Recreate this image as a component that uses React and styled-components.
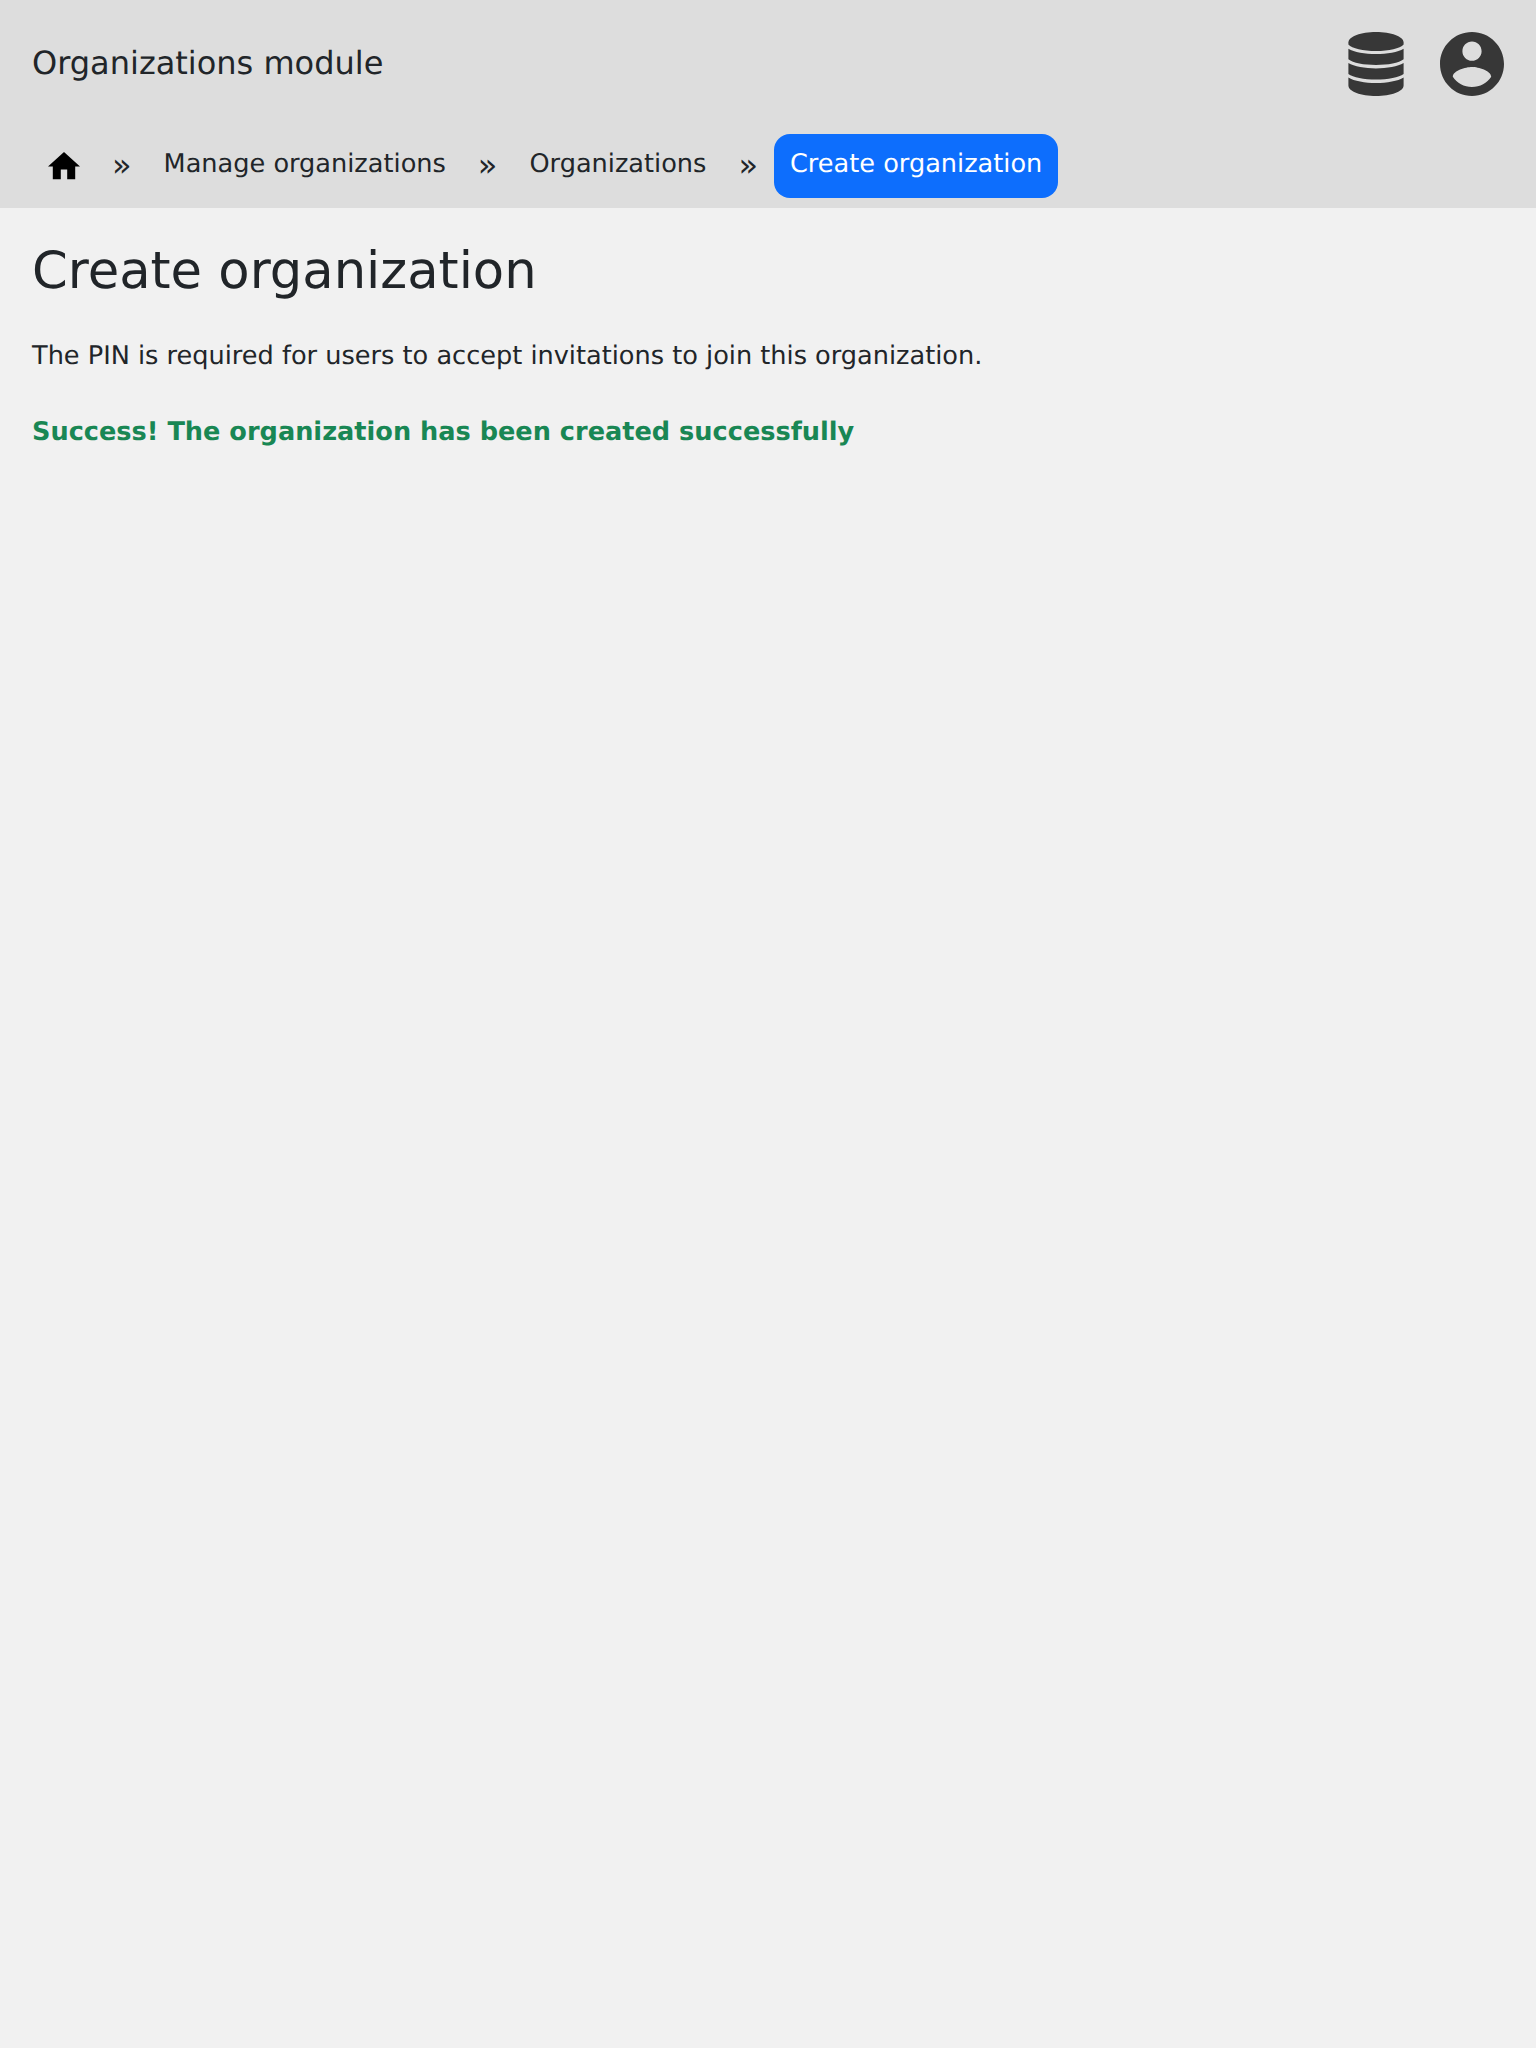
import React from "react";
import styled, { createGlobalStyle } from "styled-components";

const GlobalStyle = createGlobalStyle`
  * { box-sizing: border-box; }
  body {
    margin: 0;
    min-height: 100vh;
    background: #f1f1f1;
    color: #212529;
    font-family: "DejaVu Sans", sans-serif;
    font-size: 25.6px;
    line-height: 1.5;
    text-rendering: geometricPrecision;
  }
`;

const Header = styled.header`
  height: 208px;
  background: #ddd;
`;

const TopBar = styled.div`
  display: flex;
  align-items: center;
  justify-content: space-between;
  height: 128px;
  padding: 0 32px;
`;

const ModuleName = styled.div`
  padding-bottom: 2px;
  font-size: 32px;
  line-height: 48px;
`;

const Actions = styled.div`
  display: flex;
  gap: 36px;
`;

const IconButton = styled.button`
  display: flex;
  padding: 0;
  border: 0;
  background: none;
  color: #373737;
`;

const Breadcrumbs = styled.nav`
  display: flex;
  align-items: center;
  height: 76px;
  padding: 0 32px;
`;

const Crumb = styled.a`
  display: block;
  height: 64px;
  padding: 11px 16px 0;
  border-radius: 16px;
  line-height: 38px;
  white-space: nowrap;
  color: ${(p) => (p.$active ? "#fff" : "inherit")};
  background: ${(p) => (p.$active ? "#0d6efd" : "transparent")};
`;

const HomeCrumb = styled(Crumb)`
  padding-top: 18px;
  color: #000;

  svg {
    display: block;
  }
`;

const Separator = styled.span`
  padding: 0 16px 2px;
  font-size: 32px;
  line-height: 48px;
`;

const Main = styled.main`
  padding: 33px 32px 32px;
`;

const Title = styled.h1`
  margin: 0;
  font-size: 51.2px;
  font-weight: 400;
  line-height: 61px;
`;

const Description = styled.p`
  margin: 35px 0 0;
  line-height: 38px;
`;

const SuccessMessage = styled.p`
  margin: 38px 0 0;
  line-height: 38px;
  font-weight: 700;
  color: #198754;
`;

const DatabaseIcon = () => (
  <svg width="56" height="64" viewBox="0 0 56 64" fill="currentColor">
    <path d="M28 0C43 0 55.6 4.500 55.6 10.500V12.500C52 16.500 41 19 28 19S4 16.500 .4 12.500V10.500C.4 4.500 13 0 28 0Z" />
    <path d="M.4 16.700C6 20 17 22 28 22S50 20 55.6 16.700V27.300C51 31 40 33 28 33S5 31 .4 27.300Z" />
    <path d="M.4 31C6 34.500 17 36.400 28 36.400S50 34.500 55.6 31V42C51 45.500 40 47.600 28 47.600S5 45.500 .4 42Z" />
    <path d="M.4 45.400C6 49 17 50.900 28 50.900S50 49 55.6 45.400V53.500C55.6 59.500 43 64 28 64S.4 59.500 .4 53.500Z" />
  </svg>
);

const AccountIcon = () => (
  <svg width="64" height="64" viewBox="2 2 20 20" fill="currentColor">
    <path d="M12 2C6.480 2 2 6.480 2 12s4.480 10 10 10 10-4.480 10-10S17.520 2 12 2zm0 3c1.660 0 3 1.340 3 3s-1.340 3-3 3-3-1.340-3-3 1.340-3 3-3zm0 14.200c-2.500 0-4.710-1.280-6-3.220.03-1.990 4-3.080 6-3.080 1.990 0 5.970 1.090 6 3.080-1.290 1.940-3.500 3.220-6 3.220z" />
  </svg>
);

const HomeIcon = () => (
  <svg width="32" height="28" viewBox="2 3 20 17.500" fill="currentColor">
    <path d="M10 20v-6h4v6h5v-8h3L12 3 2 12h3v8z" />
  </svg>
);

const crumbs = ["Manage organizations", "Organizations", "Create organization"];

export default function App() {
  return (
    <>
      <GlobalStyle />
      <Header>
        <TopBar>
          <ModuleName>Organizations module</ModuleName>
          <Actions>
            <IconButton aria-label="Data">
              <DatabaseIcon />
            </IconButton>
            <IconButton aria-label="Account">
              <AccountIcon />
            </IconButton>
          </Actions>
        </TopBar>
        <Breadcrumbs>
          <HomeCrumb aria-label="Home">
            <HomeIcon />
          </HomeCrumb>
          {crumbs.map((label, i) => (
            <React.Fragment key={label}>
              <Separator>»</Separator>
              <Crumb $active={i === crumbs.length - 1}>{label}</Crumb>
            </React.Fragment>
          ))}
        </Breadcrumbs>
      </Header>
      <Main>
        <Title>Create organization</Title>
        <Description>The PIN is required for users to accept invitations to join this organization.</Description>
        <SuccessMessage>Success! The organization has been created successfully</SuccessMessage>
      </Main>
    </>
  );
}
